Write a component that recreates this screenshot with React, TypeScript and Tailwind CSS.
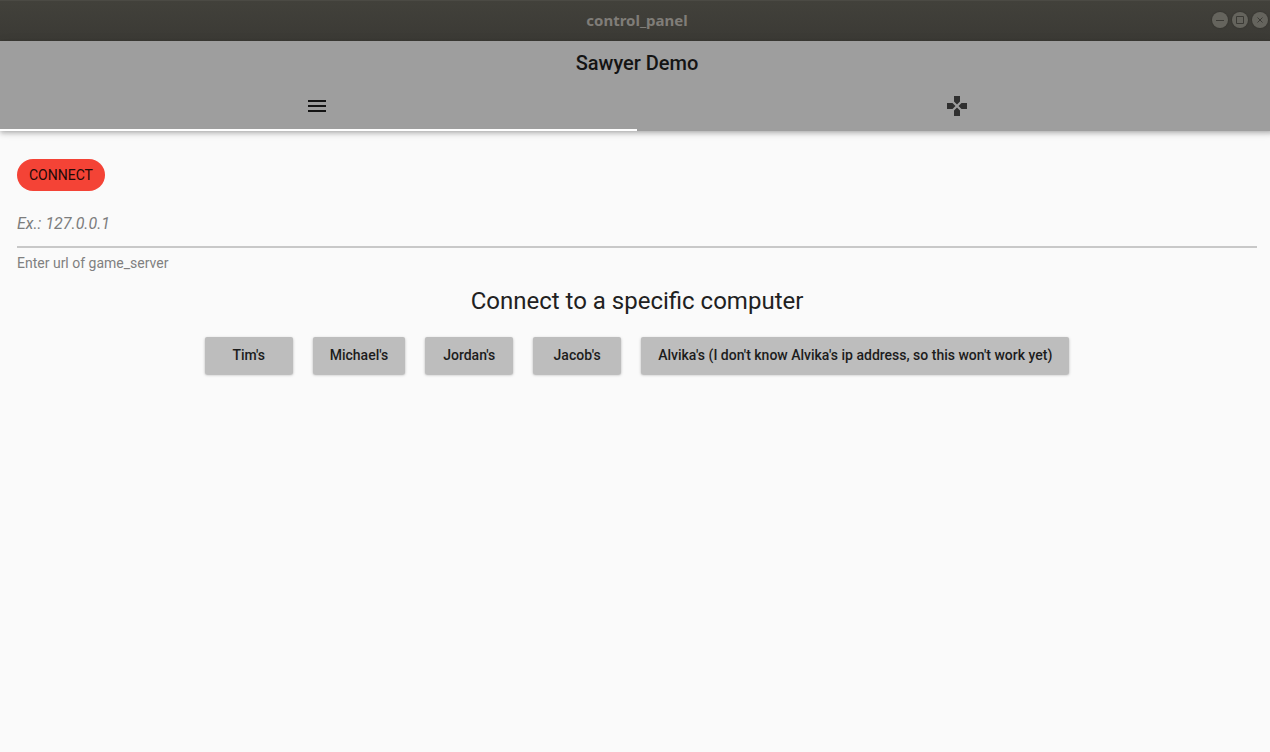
import React from "react";
import { MdGames, MdMenu } from "react-icons/md";

const computers = [
  "Tim's",
  "Michael's",
  "Jordan's",
  "Jacob's",
  "Alvika's (I don't know Alvika's ip address, so this won't work yet)",
];

function WindowButton({ label, children }: { label: string; children: React.ReactNode }) {
  return (
    <button type="button" aria-label={label} className="h-4 w-4 rounded-full bg-[#65645d] shadow-[0_0_1px_1px_#383732]">
      <svg viewBox="0 0 16 16" className="h-4 w-4" fill="none" stroke="#3b3a35" strokeWidth="1">
        {children}
      </svg>
    </button>
  );
}

function TitleBar() {
  return (
    <div className="grid h-[41px] grid-cols-[1fr_auto_1fr] items-center bg-linear-to-b from-[#42413b] to-[#3b3a35] pb-px shadow-[inset_0_1px_0_#4b4a44]">
      <span className="col-start-2 font-['Noto_Sans','Open_Sans',sans-serif] text-[15px] leading-5 font-bold text-[#807d78]">
        control_panel
      </span>
      <div className="flex justify-end gap-1 pr-1.5">
        <WindowButton label="Minimize">
          <path d="M4 8.5h8" />
        </WindowButton>
        <WindowButton label="Maximize">
          <path d="M4.5 4.5h7v7h-7z" />
        </WindowButton>
        <WindowButton label="Close">
          <path d="M5.500 5.500l5 5M10.500 5.500l-5 5" />
        </WindowButton>
      </div>
    </div>
  );
}

export default function App() {
  return (
    <div className="min-h-screen overflow-hidden bg-[#fafafa] font-[Roboto,sans-serif] text-[#212121]">
      <div className="-mr-1">
        <TitleBar />
        <header className="bg-[#9e9e9e] shadow-[0_2px_4px_-1px_rgba(0,0,0,0.15),0_3px_5px_rgba(0,0,0,0.14),0_1px_10px_rgba(0,0,0,0.08)]">
          <h1 className="h-11 text-center text-xl leading-[44px] font-medium text-[#141414]">Sawyer Demo</h1>
          <nav className="grid h-[46px] grid-cols-2" role="tablist">
            <button
              type="button"
              role="tab"
              aria-selected="true"
              aria-label="Menu"
              className="flex justify-center border-b-2 border-white pt-[9px] pr-[3px] text-[#141414]"
            >
              <MdMenu className="h-6 w-6" />
            </button>
            <button
              type="button"
              role="tab"
              aria-selected="false"
              aria-label="Controls"
              className="flex justify-center pt-[9px] pl-[3px] text-[#303030]"
            >
              <MdGames className="h-6 w-6" />
            </button>
          </nav>
        </header>
        <main className="px-[17px] pt-7">
          <button type="button" className="block h-8 rounded-full bg-[#f44336] px-3 text-sm text-[#210907]">
            CONNECT
          </button>
          <input
            id="server-url"
            type="text"
            placeholder="Ex.: 127.0.0.1"
            className="mt-2 block h-[49px] w-full border-b-2 border-[#c8c8c8] bg-transparent pt-0.5 text-base italic outline-none placeholder:text-[#7d7d7d]"
          />
          <label htmlFor="server-url" className="mt-[5px] block text-sm leading-5 text-[#808080]">
            Enter url of game_server
          </label>
          <h2 className="mt-3 text-center text-2xl leading-8">Connect to a specific computer</h2>
          <div className="mt-5 flex justify-center gap-5">
            {computers.map((name) => (
              <button
                key={name}
                type="button"
                className="h-[37px] min-w-[88px] rounded-xs bg-[#bdbdbd] px-[17px] pb-0.5 text-sm font-medium text-[#1c1c1c] shadow-[0_1px_3px_rgba(0,0,0,0.25),0_1px_1px_rgba(0,0,0,0.1)]"
              >
                {name}
              </button>
            ))}
          </div>
        </main>
      </div>
    </div>
  );
}
